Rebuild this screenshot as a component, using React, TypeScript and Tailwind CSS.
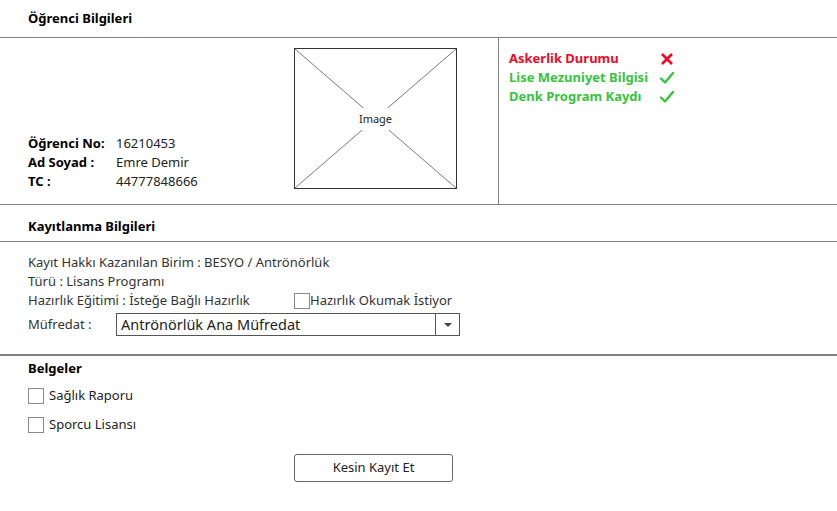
import React from 'react';

const font = { fontFamily: '"Noto Sans", "Open Sans", sans-serif' };

function Check() {
  return (
    <svg width="16" height="14" viewBox="0 0 16 14" className="block">
      <path d="M2 7.5 L6 11.5 L14 2" fill="none" stroke="#36c43c" strokeWidth="2.4" strokeLinecap="round" strokeLinejoin="round" />
    </svg>
  );
}

function Cross() {
  return (
    <svg width="14" height="14" viewBox="0 0 14 14" className="block">
      <path d="M2 2 L12 12 M12 2 L2 12" fill="none" stroke="#ee0a24" strokeWidth="2.6" />
    </svg>
  );
}

function Box() {
  return <span className="inline-block w-4 h-4 border border-[#8a8a8a] bg-white shrink-0" />;
}

export default function App() {
  return (
    <div className="w-[837px] h-[511px] bg-white text-[13px] text-[#222] overflow-hidden" style={font}>
      {/* Öğrenci Bilgileri */}
      <div className="h-[38px] flex items-center px-7 border-b border-[#808080]">
        <h2 className="font-bold text-[13px] text-black">Öğrenci Bilgileri</h2>
      </div>

      <div className="flex h-[167px] border-b border-[#808080]">
        <div className="w-[499px] border-r border-[#808080] flex pl-7 pt-[10px]">
          <div className="w-[266px] flex flex-col justify-end pb-[13px] leading-[19px]">
            <div className="flex"><span className="w-[88px] font-bold text-black">Öğrenci No:</span><span>16210453</span></div>
            <div className="flex"><span className="w-[88px] font-bold text-black">Ad Soyad :</span><span>Emre Demir</span></div>
            <div className="flex"><span className="w-[88px] font-bold text-black">TC :</span><span>44777848666</span></div>
          </div>
          <div className="relative w-[163px] h-[141px] border border-[#333] self-start">
            <svg className="absolute inset-0" width="161" height="139" viewBox="0 0 161 139">
              <line x1="0" y1="0" x2="161" y2="139" stroke="#555" strokeWidth="0.8" />
              <line x1="161" y1="0" x2="0" y2="139" stroke="#555" strokeWidth="0.8" />
            </svg>
            <span className="absolute left-1/2 top-1/2 -translate-x-1/2 -translate-y-1/2 bg-white px-[6px] py-[4px] text-[11px] leading-[14px] text-[#222]">Image</span>
          </div>
        </div>
        <div className="pl-[10px] pt-[11px] font-bold leading-[19px]">
          <div className="flex items-center"><span className="w-[151px] text-[#ee0a24]">Askerlik Durumu</span><Cross /></div>
          <div className="flex items-center"><span className="w-[150px] text-[#36c43c]">Lise Mezuniyet Bilgisi</span><Check /></div>
          <div className="flex items-center"><span className="w-[150px] text-[#36c43c]">Denk Program Kaydı</span><Check /></div>
        </div>
      </div>

      {/* Kayıtlanma Bilgileri */}
      <div className="h-[37px] flex items-center px-7 pt-[7px] border-b border-[#808080]">
        <h2 className="font-bold text-black">Kayıtlanma Bilgileri</h2>
      </div>

      <div className="h-[114px] px-7 pt-[11px] leading-[19px] border-b-2 border-[#808080] text-[#333]">
        <div>Kayıt Hakkı Kazanılan Birim : BESYO / Antrönörlük</div>
        <div>Türü : Lisans Programı</div>
        <div className="flex items-center">
          <span className="w-[266px]">Hazırlık Eğitimi : İsteğe Bağlı Hazırlık</span>
          <Box />
          <span>Hazırlık Okumak İstiyor</span>
        </div>
        <div className="flex items-center mt-[3px]">
          <span className="w-[88px]">Müfredat :</span>
          <div className="w-[344px] h-[23px] border border-[#555] flex items-center">
            <span className="flex-1 px-1 text-[14.5px] text-[#222]">Antrönörlük Ana Müfredat</span>
            <div className="w-[24px] h-full border-l border-[#555] flex items-center justify-center">
              <svg width="8" height="4" viewBox="0 0 8 4"><path d="M0 0 L8 0 L4 4 Z" fill="#444" /></svg>
            </div>
          </div>
        </div>
      </div>

      {/* Belgeler */}
      <div className="px-7 pt-[3px]">
        <h2 className="font-bold text-black leading-[19px]">Belgeler</h2>
        <div className="flex items-center gap-[5px] mt-[10px] h-4">
          <Box />
          <span>Sağlık Raporu</span>
        </div>
        <div className="flex items-center gap-[5px] mt-[13px] h-4">
          <Box />
          <span>Sporcu Lisansı</span>
        </div>
        <div className="mt-[21px] pl-[266px]">
          <button className="w-[159px] h-[28px] border border-[#666] rounded-[3px] bg-white text-[13px] text-[#222]">Kesin Kayıt Et</button>
        </div>
      </div>
    </div>
  );
}
